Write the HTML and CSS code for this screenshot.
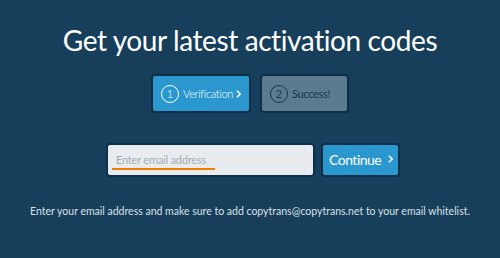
FILE: index.html
```html
<!DOCTYPE html>
<html lang="en">
<head>
  <meta charset="utf-8">
  <link rel="stylesheet" href="styles.css">
  <title>Activation codes</title>
</head>
<body>
  <h1>Get your latest activation codes</h1>
  <div class="steps">
    <div class="step active">
      <span class="num">1</span>
      <span class="label">Verification</span>
      <svg class="chev" viewBox="0 0 6 10" width="6" height="10"><path d="M1 1l4 4-4 4" /></svg>
    </div>
    <div class="step">
      <span class="num">2</span>
      <span class="label">Success!</span>
    </div>
  </div>
  <form class="mailform">
    <div class="field">
      <input type="email" placeholder="Enter email address">
      <span class="underline"></span>
    </div>
    <button type="button" class="go">
      Continue
      <svg class="chev" viewBox="0 0 6 10" width="6" height="10"><path d="M1 1l4 4-4 4" /></svg>
    </button>
  </form>
  <p class="hint">Enter your email address and make sure to add copytrans@copytrans.net to your email whitelist.</p>
</body>
</html>
```

FILE: styles.css
```css
:root {
  --bg: #173f5b;
  --blue: #2a97cf;
  --grey: #5b7c90;
  --edge: #0f2f47;
}

body {
  margin: 0;
  background: var(--bg);
  font-family: Lato, "Open Sans", sans-serif;
  color: #fff;
  text-align: center;
}

h1 {
  margin: 0;
  padding-top: 21px;
  font-size: 28px;
  line-height: 38px;
  font-weight: 400;
  letter-spacing: -0.4px;
}

.chev {
  fill: none;
  stroke: currentColor;
  stroke-width: 2;
}

.steps {
  display: flex;
  justify-content: center;
  gap: 13px;
  margin-top: 17px;
}

.step {
  display: flex;
  align-items: center;
  width: 85px;
  height: 35px;
  box-sizing: border-box;
  padding: 0 5px 0 8px;
  background: var(--grey);
  box-shadow: 0 0 0 2px var(--edge);
  border-radius: 2px;
  font-size: 11px;
  letter-spacing: -0.3px;
  color: #1c374b;
}
.step.active {
  background: var(--blue);
  color: #fff;
  width: 96px;
  font-weight: 300;
}
.step .num {
  display: inline-flex;
  align-items: center;
  justify-content: center;
  width: 16px;
  height: 16px;
  border: 1px solid currentColor;
  border-radius: 50%;
  margin-right: 4px;
  letter-spacing: 0;
}
.step .chev {
  margin-left: auto;
  margin-right: 3px;
  width: 5px;
  height: 8px;
}

.mailform {
  display: flex;
  justify-content: center;
  align-items: center;
  gap: 10px;
  margin-top: 34px;
  padding-left: 6px;
}

.field {
  position: relative;
}
.field input {
  display: block;
  width: 205px;
  height: 30px;
  box-sizing: border-box;
  border: 0;
  border-radius: 2px;
  box-shadow: 0 0 0 2px var(--edge);
  background: #e8ecee;
  padding: 0 0 2px 8px;
  font: inherit;
  font-size: 11px;
  letter-spacing: -0.2px;
}
.field input::placeholder {
  color: #a3aeb4;
}
.field .underline {
  position: absolute;
  left: 4px;
  top: 23px;
  width: 103px;
  height: 2px;
  background: #f07d00;
}

.go {
  display: flex;
  align-items: center;
  justify-content: space-between;
  height: 30px;
  width: 75px;
  margin-top: -1px;
  box-sizing: border-box;
  padding: 0 5px 1px 6px;
  border: 0;
  border-radius: 2px;
  box-shadow: 0 0 0 2px var(--edge);
  background: var(--blue);
  color: #fff;
  font: inherit;
  font-size: 14px;
  letter-spacing: -0.5px;
}
.go .chev {
  width: 5px;
  height: 8px;
}

.hint {
  margin: 30px 0 0;
  font-size: 10.5px;
  color: #d8e0e6;
}
```
